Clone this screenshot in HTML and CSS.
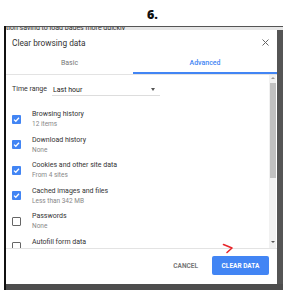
FILE: index.html
```html
<!DOCTYPE html>
<html>
<head>
    <title>Clear browsing data</title>
    <link rel="stylesheet" href="styles.css">
</head>
<body>
    <div class="caption">6.</div>

    <div class="shot">
        <div class="behind">tion saving to load pages more quickly</div>
        <div class="window">
            <div class="dialog">
                <div class="header">
                    <span class="title">Clear browsing data</span>
                    <svg class="close" width="7" height="7" viewBox="0 0 7 7">
                        <path d="M0.5 0.5 L6.5 6.5 M6.5 0.5 L0.5 6.5" stroke="#666" stroke-width="1" fill="none"/>
                    </svg>
                </div>

                <div class="tabs">
                    <div class="tab tab-basic">Basic</div>
                    <div class="tab tab-active">Advanced</div>
                </div>

                <div class="body">
                    <div class="content">
                        <div class="time-range">
                            <span class="time-label">Time range</span>
                            <div class="select">
                                <span>Last hour</span>
                                <span class="caret"></span>
                            </div>
                        </div>

                        <div class="items">
                            <div class="item">
                                <span class="check on"></span>
                                <div class="item-text">
                                    <div class="item-title">Browsing history</div>
                                    <div class="item-sub">12 items</div>
                                </div>
                            </div>
                            <div class="item">
                                <span class="check on"></span>
                                <div class="item-text">
                                    <div class="item-title">Download history</div>
                                    <div class="item-sub">None</div>
                                </div>
                            </div>
                            <div class="item">
                                <span class="check on"></span>
                                <div class="item-text">
                                    <div class="item-title">Cookies and other site data</div>
                                    <div class="item-sub">From 4 sites</div>
                                </div>
                            </div>
                            <div class="item">
                                <span class="check on"></span>
                                <div class="item-text">
                                    <div class="item-title">Cached images and files</div>
                                    <div class="item-sub">Less than 342 MB</div>
                                </div>
                            </div>
                            <div class="item">
                                <span class="check"></span>
                                <div class="item-text">
                                    <div class="item-title">Passwords</div>
                                    <div class="item-sub">None</div>
                                </div>
                            </div>
                            <div class="item">
                                <span class="check"></span>
                                <div class="item-text">
                                    <div class="item-title">Autofill form data</div>
                                </div>
                            </div>
                        </div>
                    </div>

                    <div class="scrollbar">
                        <span class="arrow-up"></span>
                        <div class="thumb"></div>
                        <span class="arrow-down"></span>
                    </div>
                </div>

                <div class="footer">
                    <button class="btn-cancel">CANCEL</button>
                    <button class="btn-clear">CLEAR DATA</button>
                    <svg class="pointer" width="12" height="11" viewBox="0 0 12 11">
                        <path d="M1.5 1.5 L10 5 L5 9.5" stroke="#e8262b" stroke-width="1.6" fill="none" stroke-linecap="round" stroke-linejoin="round"/>
                    </svg>
                </div>
            </div>
            <div class="shadow"></div>
        </div>
    </div>
</body>
</html>
```

FILE: styles.css
```css
body {
    margin: 0;
    background: #fff;
    font-family: Roboto, "Liberation Sans", sans-serif;
    color: #333;
}
.caption {
    height: 26px;
    box-sizing: border-box;
    padding: 7px 0 0 17px;
    text-align: center;
    font-family: "Open Sans", sans-serif;
    font-weight: 800;
    font-size: 12.5px;
    line-height: 15px;
    color: #111;
}
.shot {
    margin-left: 4px;
    width: 279px;
    border-left: 2px solid #111;
    box-sizing: border-box;
    background: #4d4d4d;
    padding-bottom: 6px;
}
.behind {
    height: 3px;
    border-top: 1px solid #555;
    background: #e6e6e6;
    overflow: hidden;
    font-size: 7px;
    line-height: 2px;
    color: #333;
    white-space: nowrap;
}
.window {
    display: flex;
}
.dialog {
    position: relative;
    width: 271px;
    height: 254px;
    background: #fff;
    display: flex;
    flex-direction: column;
}
.shadow {
    flex: 1;
    background: #555;
}
.header {
    height: 24px;
    box-sizing: border-box;
    padding: 7px 8px 0 6px;
    display: flex;
    justify-content: space-between;
    align-items: flex-start;
}
.title {
    font-size: 8.3px;
    line-height: 12px;
    color: #333;
}
.close {
    margin-top: 2px;
}
.tabs {
    display: flex;
    height: 21px;
    border-bottom: 1px solid #e3e3e3;
    box-sizing: border-box;
}
.tab {
    font-size: 7px;
    line-height: 18px;
    text-align: center;
    color: #777;
}
.tab-basic {
    width: 127px;
}
.tab-active {
    flex: 1;
    color: #4285f4;
    font-weight: 500;
    border-bottom: 2px solid #4285f4;
}
.body {
    display: flex;
    height: 173px;
    overflow: hidden;
    padding-right: 1px;
}
.content {
    flex: 1;
    padding-left: 6px;
    overflow: hidden;
}
.time-range {
    display: flex;
    align-items: center;
    margin-top: 8px;
    height: 12px;
    font-size: 7px;
}
.time-label {
    width: 40px;
    color: #333;
}
.select {
    width: 108px;
    height: 12px;
    margin-top: 2px;
    border-bottom: 1px solid #ddd;
    display: flex;
    justify-content: space-between;
    align-items: center;
    padding-left: 1px;
    box-sizing: border-box;
    color: #222;
}
.caret {
    width: 0;
    height: 0;
    margin-right: 5px;
    border-left: 2.5px solid transparent;
    border-right: 2.5px solid transparent;
    border-top: 3px solid #555;
}
.items {
    margin-top: 14px;
}
.item {
    display: flex;
    height: 25.6px;
}
.check {
    width: 9px;
    height: 9px;
    margin-top: 5.5px;
    margin-right: 11px;
    box-sizing: border-box;
    border: 1.4px solid #666;
    border-radius: 1px;
    flex-shrink: 0;
}
.check.on {
    border: none;
    background: #4285f4 url("data:image/svg+xml;utf8,<svg xmlns='http://www.w3.org/2000/svg' width='9' height='9' viewBox='0 0 9 9'><path d='M2 4.6 L3.8 6.3 L7 2.8' stroke='white' stroke-width='1.3' fill='none'/></svg>") no-repeat center;
}
.item-title {
    font-size: 7px;
    line-height: 10px;
    color: #333;
}
.item-sub {
    font-size: 6.5px;
    line-height: 10px;
    color: #888;
}
.scrollbar {
    width: 7px;
    background: #f1f1f1;
    display: flex;
    flex-direction: column;
    align-items: center;
}
.arrow-up, .arrow-down {
    width: 0;
    height: 0;
    border-left: 2px solid transparent;
    border-right: 2px solid transparent;
}
.arrow-up {
    margin-top: 2px;
    border-bottom: 2px solid #999;
}
.arrow-down {
    margin-top: auto;
    margin-bottom: 5px;
    border-top: 2px solid #555;
}
.thumb {
    width: 6px;
    height: 95px;
    margin-top: 4px;
    background: #c1c1c1;
}
.footer {
    flex: 1;
    border-top: 1px solid #e3e3e3;
    display: flex;
    justify-content: flex-end;
    align-items: flex-start;
    padding: 7px 8px 0 0;
    gap: 6px;
}
button {
    font-family: Roboto, "Liberation Sans", sans-serif;
    font-size: 6.5px;
    font-weight: bold;
    border: none;
    border-radius: 2px;
    height: 19px;
    cursor: pointer;
}
.btn-cancel {
    background: none;
    color: #777;
    padding: 0 8px;
}
.btn-clear {
    width: 57px;
    background: #4285f4;
    color: #fff;
    padding: 0;
}
.pointer {
    position: absolute;
    left: 216px;
    top: 213px;
}
```
